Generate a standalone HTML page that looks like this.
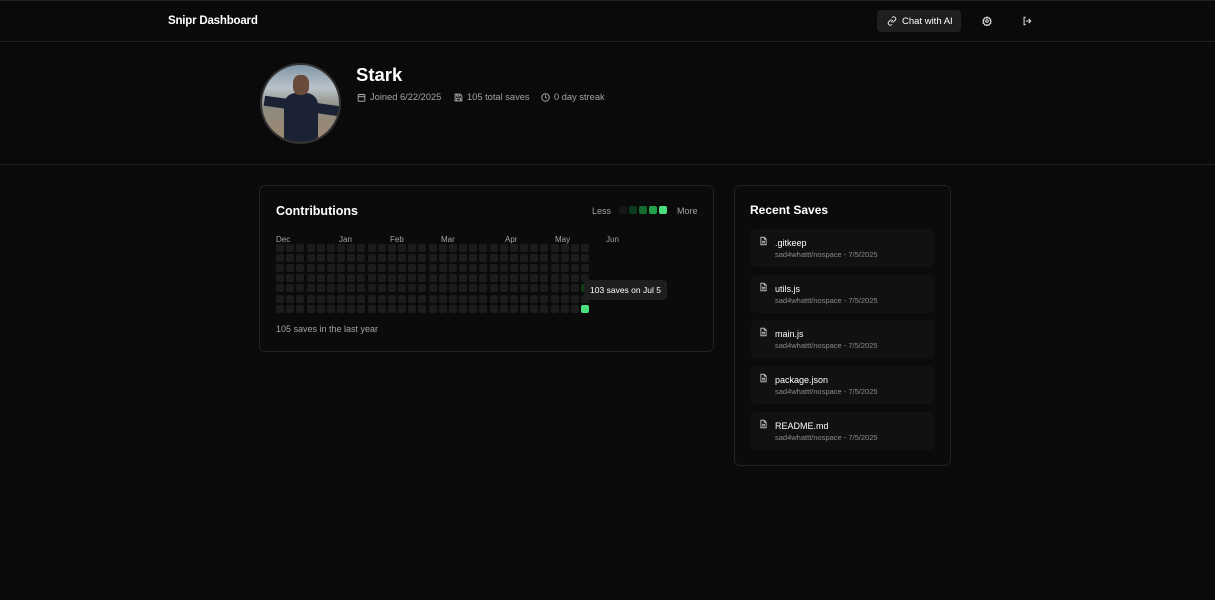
<!DOCTYPE html>
<html><head><meta charset="utf-8"><style>
*{box-sizing:border-box;margin:0;padding:0}
body{width:1215px;height:600px;background:#0a0a0a;font-family:"Liberation Sans",sans-serif;color:#fff;position:relative;overflow:hidden}
.a{position:absolute}
.top{left:0;top:0;width:1215px;height:42px;border-top:1px solid #222;border-bottom:1px solid #222}
.hero{left:0;top:42px;width:1215px;height:123px;border-bottom:1px solid #222;background:#0a0a0a}
.card{border:1px solid #222;border-radius:6px;background:#0b0b0b}
.meta{font-size:9.3px;color:#a3a3a3;top:92px;display:flex;align-items:center;gap:4px}
.c{position:absolute;width:8px;height:8px;border-radius:2px;background:#1c1c1c}
.m{position:absolute;top:235px;font-size:8px;color:#a3a3a3}
.item{position:absolute;left:751px;width:184px;height:38px;background:#111;border-radius:5px}
.item .n{position:absolute;left:24px;top:9px;font-size:9px;color:#fff}
.item .s{position:absolute;left:24px;top:21px;font-size:7.5px;color:#8a8a8a}
.item svg{position:absolute;left:8px;top:7px}
</style></head><body>
<div class="a top"></div>
<div class="a" style="left:168px;top:15px;font-size:11.5px;font-weight:bold;letter-spacing:-0.2px">Snipr Dashboard</div>
<div class="a" style="left:877px;top:10px;width:84px;height:22px;background:#1f1f1f;border-radius:4px;font-size:9.5px;display:flex;align-items:center;padding-left:10px;gap:5px">
<svg width="10" height="10" viewBox="0 0 24 24" fill="none" stroke="#ddd" stroke-width="2.5"><path d="M10 13a5 5 0 0 0 7 0l3-3a5 5 0 0 0-7-7l-1 1M14 11a5 5 0 0 0-7 0l-3 3a5 5 0 0 0 7 7l1-1"/></svg>Chat with AI</div>
<svg class="a" style="left:982px;top:16px" width="10" height="10" viewBox="0 0 24 24" fill="none" stroke="#ddd" stroke-width="2.5"><circle cx="12" cy="12" r="3"/><path d="M12 2l2 3 3-1 1 3 3 1-1 3 2 2-2 2 1 3-3 1-1 3-3-1-2 3-2-3-3 1-1-3-3-1 1-3-2-2 2-2-1-3 3-1 1-3 3 1z"/></svg>
<svg class="a" style="left:1022px;top:16px" width="10" height="10" viewBox="0 0 24 24" fill="none" stroke="#ddd" stroke-width="2.5"><path d="M9 21H5V3h4M16 17l5-5-5-5M21 12H9"/></svg>
<div class="a hero"></div>
<div class="a" style="left:260px;top:63px;width:81px;height:81px;border-radius:50%;border:2px solid #333;background:linear-gradient(180deg,#7f95a6 0%,#b9c3c9 30%,#8c8a80 55%,#a08870 100%);overflow:hidden">
<div class="a" style="left:22px;top:28px;width:34px;height:55px;background:#1a2233;border-radius:12px 12px 0 0"></div>
<div class="a" style="left:2px;top:36px;width:76px;height:10px;background:#1a2233;transform:rotate(8deg)"></div>
<div class="a" style="left:31px;top:10px;width:16px;height:20px;background:#6a4a3a;border-radius:40%"></div>
</div>
<div class="a" style="left:356px;top:64px;font-size:18.5px;font-weight:bold">Stark</div>
<div class="a meta" style="left:357px"><svg width="9" height="9" viewBox="0 0 24 24" fill="none" stroke="#aaa" stroke-width="2.5"><rect x="3" y="4" width="18" height="18" rx="2"/><path d="M3 10h18M8 2v4M16 2v4"/></svg>Joined 6/22/2025</div>
<div class="a meta" style="left:454px"><svg width="9" height="9" viewBox="0 0 24 24" fill="none" stroke="#aaa" stroke-width="2.5"><path d="M5 3h11l5 5v13H3V3zM7 3v5h8V3M7 21v-7h10v7"/></svg>105 total saves</div>
<div class="a meta" style="left:541px"><svg width="9" height="9" viewBox="0 0 24 24" fill="none" stroke="#aaa" stroke-width="2.5"><circle cx="12" cy="12" r="10"/><path d="M12 6v6l4 2"/></svg>0 day streak</div>

<div class="a card" style="left:259px;top:185px;width:455px;height:167px"></div>
<div class="a" style="left:276px;top:204px;font-size:12.5px;font-weight:bold">Contributions</div>
<div class="a" style="left:592px;top:206px;font-size:9px;color:#a3a3a3">Less</div>
<div class="c" style="left:619px;top:206px;background:#161616"></div>
<div class="c" style="left:629px;top:206px;background:#0e3a1c"></div>
<div class="c" style="left:639px;top:206px;background:#166b30"></div>
<div class="c" style="left:649px;top:206px;background:#22a04a"></div>
<div class="c" style="left:659px;top:206px;background:#4ade80"></div>
<div class="a" style="left:677px;top:206px;font-size:9px;color:#a3a3a3">More</div>
<div class="m" style="left:276px">Dec</div><div class="m" style="left:339px">Jan</div><div class="m" style="left:390px">Feb</div><div class="m" style="left:441px">Mar</div><div class="m" style="left:505px">Apr</div><div class="m" style="left:555px">May</div><div class="m" style="left:606px">Jun</div>
<div id="g"></div>
<div class="a" style="left:584px;top:280px;width:83px;height:20px;background:#1e1e1e;border-radius:4px;font-size:8.5px;display:flex;align-items:center;justify-content:center">103 saves on Jul 5</div>
<div class="a" style="left:276px;top:324px;font-size:9px;color:#a3a3a3">105 saves in the last year</div>

<div class="a card" style="left:734px;top:185px;width:217px;height:281px"></div>
<div class="a" style="left:750px;top:203px;font-size:12px;font-weight:bold">Recent Saves</div>
<div class="item" style="top:229px"><svg width="9" height="10" viewBox="0 0 24 24" fill="none" stroke="#bbb" stroke-width="2.5"><path d="M14 2H5v20h14V7zM14 2v5h5M8 13h8M8 17h8"/></svg><div class="n">.gitkeep</div><div class="s">sad4whattt/nospace - 7/5/2025</div></div>
<div class="item" style="top:275px"><svg width="9" height="10" viewBox="0 0 24 24" fill="none" stroke="#bbb" stroke-width="2.5"><path d="M14 2H5v20h14V7zM14 2v5h5M8 13h8M8 17h8"/></svg><div class="n">utils.js</div><div class="s">sad4whattt/nospace - 7/5/2025</div></div>
<div class="item" style="top:320px"><svg width="9" height="10" viewBox="0 0 24 24" fill="none" stroke="#bbb" stroke-width="2.5"><path d="M14 2H5v20h14V7zM14 2v5h5M8 13h8M8 17h8"/></svg><div class="n">main.js</div><div class="s">sad4whattt/nospace - 7/5/2025</div></div>
<div class="item" style="top:366px"><svg width="9" height="10" viewBox="0 0 24 24" fill="none" stroke="#bbb" stroke-width="2.5"><path d="M14 2H5v20h14V7zM14 2v5h5M8 13h8M8 17h8"/></svg><div class="n">package.json</div><div class="s">sad4whattt/nospace - 7/5/2025</div></div>
<div class="item" style="top:412px"><svg width="9" height="10" viewBox="0 0 24 24" fill="none" stroke="#bbb" stroke-width="2.5"><path d="M14 2H5v20h14V7zM14 2v5h5M8 13h8M8 17h8"/></svg><div class="n">README.md</div><div class="s">sad4whattt/nospace - 7/5/2025</div></div>
<script>
var h='';for(var c=0;c<31;c++)for(var r=0;r<7;r++){var x=276+c*10.17,y=244+r*10.1;var bg=(c==30&&r==6)?'#4ade80':(c==30&&r==4)?'#0e3a1c':'#1c1c1c';h+='<div class="c" style="left:'+x+'px;top:'+y+'px;background:'+bg+'"></div>';}
document.getElementById('g').innerHTML=h;
</script>
</body></html>
